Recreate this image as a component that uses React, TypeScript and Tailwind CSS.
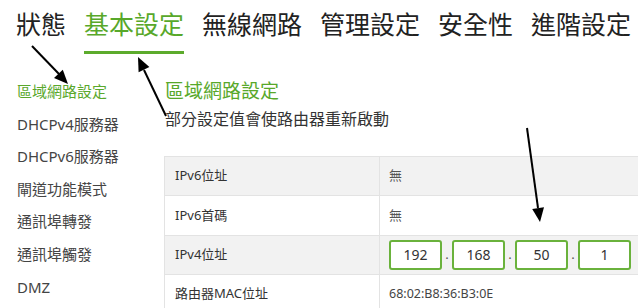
import React from "react";

const tabs = ["狀態", "基本設定", "無線網路", "管理設定", "安全性", "進階設定"];
const side = ["區域網路設定", "DHCPv4服務器", "DHCPv6服務器", "閘道功能模式", "通訊埠轉發", "通訊埠觸發", "DMZ"];

export default function App() {
  const font = { fontFamily: '"Noto Sans", "Noto Sans CJK TC", sans-serif' };
  return (
    <div className="relative w-[638px] h-[308px] overflow-hidden bg-white" style={font}>
      <nav className="flex gap-[18px] pl-[16px] h-[54px]">
        {tabs.map((t, i) => (
          <div key={t} className="flex flex-col pt-[7px]">
            <span className={`text-[25px] leading-[34px] whitespace-nowrap ${i === 1 ? "text-[#58a82a]" : "text-[#222]"}`}>{t}</span>
            {i === 1 && <div className="mt-[10px] h-[3px] bg-[#5cab2c]" />}
          </div>
        ))}
      </nav>
      <div className="flex">
        <aside className="w-[164px] shrink-0 pl-[17px] pt-[21px]">
          {side.map((s, i) => (
            <div key={s} className={`h-[32.6px] flex items-center text-[15px] whitespace-nowrap ${i === 0 ? "text-[#5aa82c]" : "text-[#444]"}`}>{s}</div>
          ))}
        </aside>
        <main className="flex-1 min-w-0 pt-[24px]">
          <h2 className="pl-[1px] text-[19px] leading-[26px] text-[#58a82a]">區域網路設定</h2>
          <p className="pl-[1px] text-[16px] leading-[24px] mt-[3px] text-[#333]">部分設定值會使路由器重新啟動</p>
          <div className="mt-[25px] w-[520px] border-l border-t border-[#e3e3e3] text-[13px]">
            <Row label="IPv6位址" gray><span className="text-[#555]">無</span></Row>
            <Row label="IPv6首碼"><span className="text-[#555]">無</span></Row>
            <Row label="IPv4位址" gray>
              <div className="flex items-center">
                {["192", "168", "50", "1"].map((v, i) => (
                  <React.Fragment key={i}>
                    {i > 0 && <span className="w-[10px] text-center text-[#555]">.</span>}
                    <div className="w-[53px] h-[30px] border-2 border-[#6ab23c] rounded-[3px] bg-white flex items-center justify-center text-[14px] text-[#333]">{v}</div>
                  </React.Fragment>
                ))}
              </div>
            </Row>
            <Row label="路由器MAC位址"><span className="text-[12.5px] text-[#444]">68:02:B8:36:B3:0E</span></Row>
          </div>
        </main>
      </div>
      <svg className="absolute inset-0 pointer-events-none" width="638" height="308">
        <line x1="32" y1="46" x2="59" y2="74" stroke="#000" strokeWidth="2" />
        <polygon points="68,84 54,77.9 62.8,69.7" fill="#000" />
        <line x1="166" y1="116" x2="144" y2="70" stroke="#000" strokeWidth="2" />
        <polygon points="138,57 149.4,67.1 138.6,72.3" fill="#000" />
        <line x1="527" y1="128" x2="538" y2="208" stroke="#000" strokeWidth="2" />
        <polygon points="540,222 532.2,208.9 544,207.3" fill="#000" />
      </svg>
    </div>
  );
}

function Row({ label, gray, children }: { label: string; gray?: boolean; children: React.ReactNode }) {
  return (
    <div className={`flex h-[39.3px] border-b border-[#e3e3e3] ${gray ? "bg-[#f2f2f2]" : "bg-white"}`}>
      <div className="w-[215px] shrink-0 pl-[10px] flex items-center text-[#333] border-r border-[#e3e3e3]">{label}</div>
      <div className="flex-1 pl-[9px] flex items-center">{children}</div>
    </div>
  );
}
